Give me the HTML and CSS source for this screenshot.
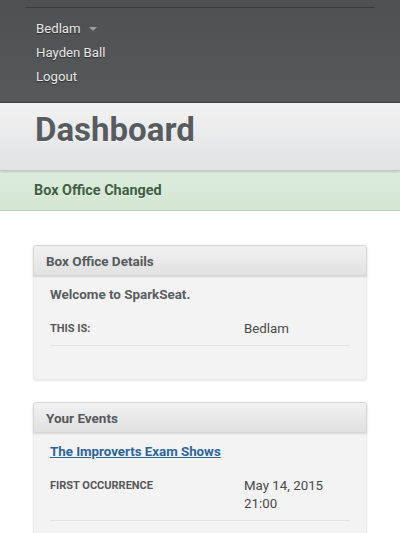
FILE: index.html
```html
<!DOCTYPE html>
<html>
<head>
<meta charset="utf-8">
<link rel="stylesheet" href="styles.css">
</head>
<body>
<header class="topbar">
  <div class="topbar-inner">
    <ul class="nav">
      <li class="nav-item">Bedlam <span class="caret"></span></li>
      <li class="nav-item">Hayden Ball</li>
      <li class="nav-item">Logout</li>
    </ul>
  </div>
</header>
<div class="page-title">
  <h1>Dashboard</h1>
</div>
<div class="alert">Box Office Changed</div>
<main class="content">
  <section class="panel">
    <div class="panel-heading">Box Office Details</div>
    <div class="panel-body">
      <p class="welcome">Welcome to SparkSeat.</p>
      <dl class="details">
        <dt>This is:</dt>
        <dd>Bedlam</dd>
      </dl>
    </div>
  </section>
  <section class="panel">
    <div class="panel-heading">Your Events</div>
    <div class="panel-body">
      <a class="event-link" href="#">The Improverts Exam Shows</a>
      <dl class="details">
        <dt>First Occurrence</dt>
        <dd>May 14, 2015<br>21:00</dd>
      </dl>
    </div>
  </section>
</main>
</body>
</html>
```
FILE: styles.css
```css
* { box-sizing: border-box; }
html, body { margin: 0; padding: 0; }
body {
  font-family: Roboto, "Liberation Sans", sans-serif;
  background: #fff;
  color: #555;
}
.topbar {
  background: linear-gradient(to bottom, #4d5154, #55595c);
  padding: 7px 25px 0;
  height: 103px;
  border-bottom: 1px solid #3e4144;
}
.topbar-inner {
  border-top: 1px solid #3a3d40;
}
.nav {
  list-style: none;
  margin: 0;
  padding: 9px 0 0 11px;
}
.nav-item {
  font-size: 13.2px;
  line-height: 24px;
  color: #e8e8e8;
  text-shadow: 0 1px 1px rgba(0,0,0,0.5);
  display: flex;
  align-items: center;
}
.caret {
  display: inline-block;
  width: 0;
  height: 0;
  margin-left: 8px;
  border-left: 4px solid transparent;
  border-right: 4px solid transparent;
  border-top: 4px solid #9a9da0;
}
.page-title {
  background: linear-gradient(to bottom, #f2f2f2, #e1e2e4);
  height: 68px;
  border-bottom: 1px solid #c8c9cb;
  box-shadow: 0 1px 2px rgba(0,0,0,0.15);
  padding: 0 35px;
  display: flex;
  align-items: center;
  position: relative;
}
.page-title h1 {
  margin: 0;
  font-size: 33px;
  font-weight: 700;
  color: #585c61;
  text-shadow: 0 1px 0 #fff;
  margin-top: -14px;
}
.alert {
  background: linear-gradient(to bottom, #dcecdc, #d2e6d2);
  border-bottom: 1px solid #b5d6b5;
  height: 40px;
  display: flex;
  align-items: center;
  padding: 0 34px;
  font-size: 14.4px;
  font-weight: 700;
  color: #3e5f40;
  text-shadow: 0 1px 0 rgba(255,255,255,0.5);
}
.content {
  padding: 34px 33px 0;
  display: flex;
  flex-direction: column;
  gap: 22px;
}
.panel {
  background: #f3f3f3;
  border-radius: 4px;
  box-shadow: 0 1px 2px rgba(0,0,0,0.1);
  border: 1px solid #ececec;
}
.panel-heading {
  height: 31px;
  background: linear-gradient(to bottom, #f1f1f1, #e1e1e2);
  border: 1px solid #d6d6d6;
  margin: -1px -1px 0;
  box-shadow: 0 1px 2px rgba(0,0,0,0.12);
  border-radius: 3px 3px 0 0;
  display: flex;
  align-items: center;
  padding: 1px 12px 0;
  font-size: 13.5px;
  font-weight: 700;
  color: #56595d;
}
.panel-body {
  padding: 6px 16px 33px;
}
.welcome {
  margin: 0;
  font-size: 13.4px;
  font-weight: 700;
  color: #5a5d61;
  line-height: 26px;
}
.details {
  margin: 12px 0 0;
  display: grid;
  grid-template-columns: 194px 1fr;
  border-bottom: 1px solid #e2e2e2;
  padding-bottom: 7px;
}
.details dt {
  font-size: 11px;
  font-weight: 700;
  text-transform: uppercase;
  color: #585858;
  line-height: 18px;
}
.details dd {
  margin: 0;
  font-size: 13.3px;
  color: #4a4a4a;
  line-height: 18px;
}
.event-link {
  display: block;
  font-size: 13.3px;
  font-weight: 700;
  color: #2d6597;
  text-decoration: underline;
  line-height: 26px;
}
```
